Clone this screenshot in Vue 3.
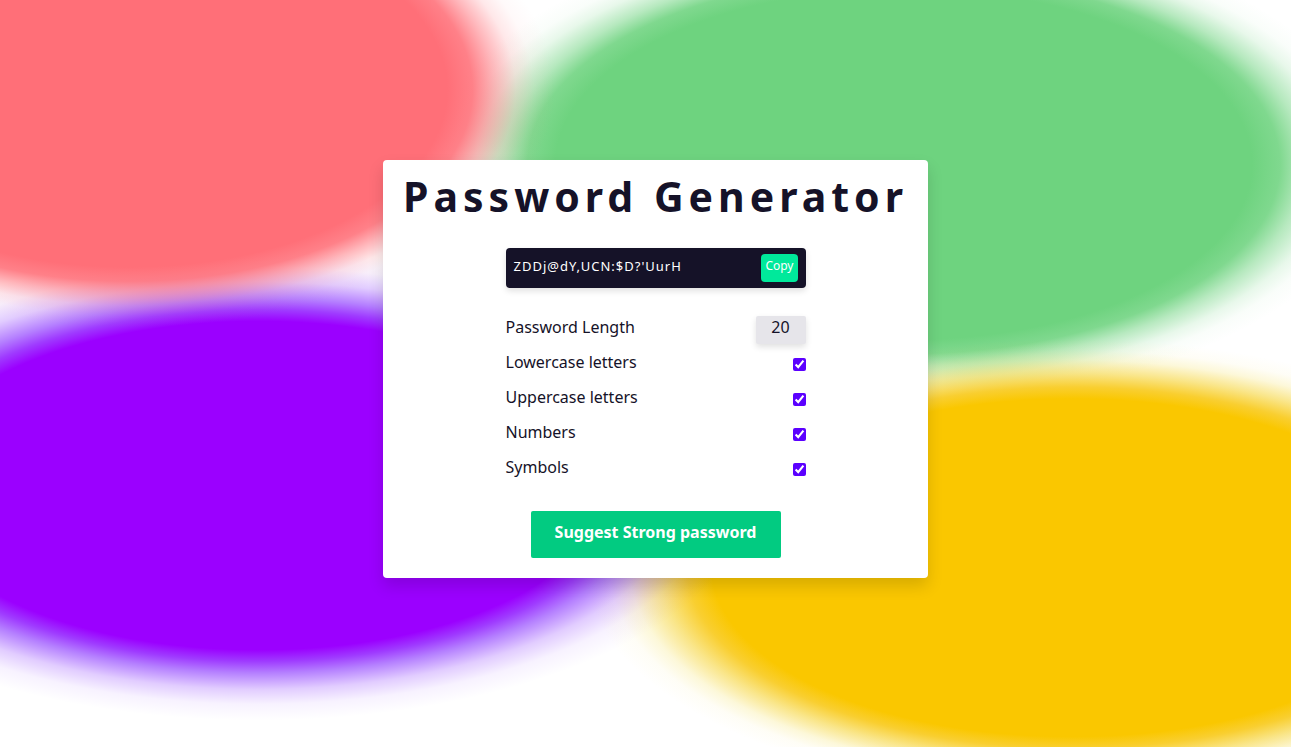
<script setup>
import { ref } from 'vue'

const password = ref("ZDDj@dY,UCN:$D?'UurH")
const length = ref(20)
const options = ref([
  { id: 'lower', label: 'Lowercase letters', chars: 'abcdefghijklmnopqrstuvwxyz', on: true },
  { id: 'upper', label: 'Uppercase letters', chars: 'ABCDEFGHIJKLMNOPQRSTUVWXYZ', on: true },
  { id: 'numbers', label: 'Numbers', chars: '0123456789', on: true },
  { id: 'symbols', label: 'Symbols', chars: "!@#$%^&*()?,.:'", on: true },
])

function generate() {
  const pool = options.value.filter((o) => o.on).map((o) => o.chars).join('')
  let next = ''
  for (let i = 0; pool && i < length.value; i++) {
    next += pool[Math.floor(Math.random() * pool.length)]
  }
  password.value = next
}

function copy() {
  navigator.clipboard?.writeText(password.value)
}
</script>

<template>
  <main class="page">
    <section class="card">
      <h1 class="title">Password Generator</h1>
      <div class="result">
        <output class="password">{{ password }}</output>
        <button class="copy" type="button" @click="copy">Copy</button>
      </div>
      <div class="options">
        <div class="row">
          <label for="length">Password Length</label>
          <input id="length" v-model.number="length" class="length" type="number" min="4" max="20" />
        </div>
        <div v-for="o in options" :key="o.id" class="row">
          <label :for="o.id">{{ o.label }}</label>
          <input :id="o.id" v-model="o.on" class="check" type="checkbox" />
        </div>
      </div>
      <button class="suggest" type="button" @click="generate">Suggest Strong password</button>
    </section>
  </main>
</template>

<style>
body {
  margin: 0;
}
</style>

<style scoped>
.page {
  min-height: 100vh;
  box-sizing: border-box;
  display: flex;
  align-items: center;
  justify-content: center;
  padding: 0 0 9px 20px;
  font-family: "Noto Sans", "Open Sans", sans-serif;
  color: #151228;
  background:
    radial-gradient(ellipse 28% 27% at 10% 12%,
      rgb(255 111 120) 88%, rgb(255 111 120 / 0.88) 95%, rgb(255 111 120 / 0.5) 101%,
      rgb(255 111 120 / 0.16) 107%, rgb(255 111 120 / 0.04) 112%, rgb(255 111 120 / 0) 118%),
    radial-gradient(ellipse 27% 22% at 20% 65%,
      rgb(155 0 255) 100%, rgb(130 0 255 / 0.77) 107%, rgb(107 0 255 / 0.5) 114%,
      rgb(107 0 255 / 0.2) 124%, rgb(107 0 255 / 0.05) 133%, rgb(107 0 255 / 0) 143%),
    radial-gradient(ellipse 32% 26% at 83% 76%,
      rgb(250 199 0) 87%, rgb(248 200 20 / 0.88) 93%, rgb(244 204 20 / 0.5) 100%,
      rgb(240 210 20 / 0.16) 107%, rgb(240 210 20 / 0.04) 112%, rgb(240 210 20 / 0) 118%),
    radial-gradient(ellipse 31% 27% at 70% 22%,
      rgb(110 211 127) 87%, rgb(110 211 127 / 0.88) 94%, rgb(110 211 127 / 0.5) 100%,
      rgb(110 211 127 / 0.16) 107%, rgb(110 211 127 / 0.04) 112%, rgb(110 211 127 / 0) 118%),
    #fff;
}

.card {
  box-sizing: border-box;
  display: flex;
  flex-direction: column;
  align-items: center;
  padding: 8px 20px 20px;
  border-radius: 4px;
  background: #fff;
  box-shadow: 0 8px 16px rgba(0, 0, 0, 0.14);
}

.title {
  margin: 0 0 24px;
  font-size: 41px;
  line-height: 56px;
  letter-spacing: 5px;
}

.result {
  box-sizing: border-box;
  display: flex;
  align-items: center;
  justify-content: space-between;
  width: 300px;
  height: 40px;
  padding: 0 8px;
  border-radius: 4px;
  background: #151228;
  color: #fff;
  box-shadow: 0 3px 6px rgba(0, 0, 0, 0.12);
}

.password {
  padding-bottom: 4px;
  font-size: 13px;
  line-height: 20px;
  letter-spacing: 1px;
}

.copy {
  height: 28px;
  padding: 0 4px 4px;
  border: 0;
  border-radius: 4px;
  background: #00e99b;
  color: #fff;
  font: 12px/20px "Noto Sans", sans-serif;
}

.options {
  display: flex;
  flex-direction: column;
  gap: 7px;
  width: 300px;
  margin-top: 28px;
}

.row {
  display: flex;
  justify-content: space-between;
  height: 28px;
  font-size: 16px;
  line-height: 22px;
}

.length {
  box-sizing: border-box;
  width: 50px;
  height: 28px;
  padding: 0 0 6px;
  border: 0;
  border-radius: 2px;
  background: #e6e5ea;
  color: #151228;
  font: 16px/20px "Noto Sans", sans-serif;
  text-align: center;
  appearance: textfield;
  box-shadow: 0 3px 6px rgba(0, 0, 0, 0.12);
}

.length::-webkit-inner-spin-button {
  appearance: none;
  margin: 0;
}

.check {
  width: 13px;
  height: 13px;
  margin: 7px 0 0;
  accent-color: #5b00ff;
}

.suggest {
  width: 250px;
  height: 47px;
  margin-top: 27px;
  padding: 0 0 5px;
  border: 0;
  border-radius: 2px;
  background: #02cb81;
  color: #fff;
  font: bold 16px/22px "Noto Sans", sans-serif;
}
</style>
